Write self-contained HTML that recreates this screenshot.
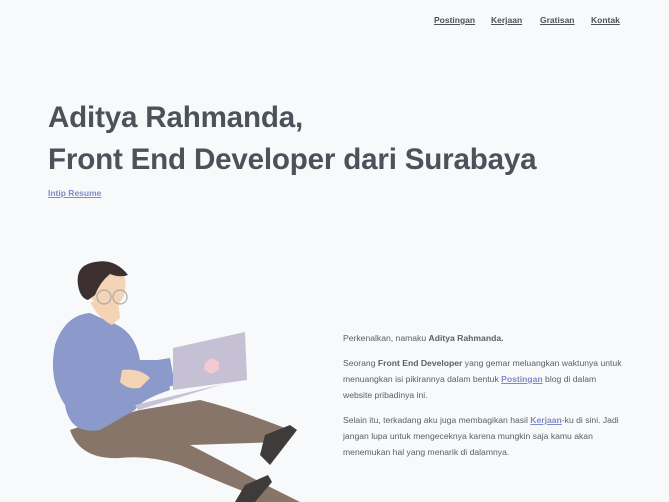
<!DOCTYPE html>
<html><head><meta charset="utf-8"><style>
body{margin:0;width:669px;height:502px;background:#f8f9fb;font-family:"Liberation Sans",sans-serif;color:#4b5259;overflow:hidden;position:relative}
a{color:#4b5259;font-weight:bold;text-decoration:underline}
.nav{position:absolute;top:15px;font-size:8.5px;font-weight:bold}
h1{position:absolute;left:48px;top:97px;margin:0;font-size:29.6px;line-height:42px;font-weight:bold;color:#4b5259;letter-spacing:-0.2px}
.resume{position:absolute;left:48px;top:188px;font-size:8.5px;color:#7f8bc6}
.txt{position:absolute;left:343px;top:330px;width:284px;font-size:8.6px;line-height:16px;color:#5a6068}
.txt p{margin:0 0 9px}
.txt a{color:#7f8bc6}
</style></head><body>
<a class="nav" style="left:434px">Postingan</a>
<a class="nav" style="left:491px">Kerjaan</a>
<a class="nav" style="left:540px">Gratisan</a>
<a class="nav" style="left:591px">Kontak</a>
<h1>Aditya Rahmanda,<br>Front End Developer dari Surabaya</h1>
<a class="resume">Intip Resume</a>
<svg style="position:absolute;left:40px;top:260px" width="270" height="242" viewBox="0 0 270 242">
<path d="M30 170 Q40 200 80 198 Q110 195 140 205 Q175 220 205 232 L200 242 L260 242 L220 222 Q180 200 150 185 L240 182 L250 170 Q200 150 160 140 L100 150 Q60 160 30 170Z" fill="#887569"/>
<path d="M225 175 L250 165 L257 170 L230 205 L220 195 Z" fill="#3f3b3a"/>
<path d="M205 225 L228 215 L232 222 L215 242 L195 242 Z" fill="#3f3b3a"/>
<path d="M15 85 Q25 55 50 53 L70 62 Q95 70 100 100 L125 100 L130 130 Q100 140 95 150 L60 170 Q30 175 25 145 Q8 120 15 85Z" fill="#8b99cb"/>
<path d="M105 102 L130 98 L135 125 L100 135Z" fill="#8b99cb"/>
<path d="M95 145 L200 120 L203 118 L98 150 Z" fill="#c8c2d6"/>
<path d="M133 88 L205 72 L207 120 L133 130 Z" fill="#c6c0d4"/>
<path d="M165 103 L172 98 L179 102 L179 110 L171 114 L164 110Z" fill="#f2cad0"/>
<path d="M82 110 Q100 108 110 118 L100 128 Q88 130 80 122Z" fill="#f5d3b5"/>
<path d="M50 42 Q58 58 72 65 L80 58 L78 40 Z" fill="#f5d3b5"/>
<path d="M50 20 Q55 5 75 8 Q88 12 85 30 Q83 45 70 48 Q55 48 50 35Z" fill="#f5d3b5"/>
<path d="M38 25 Q35 5 55 2 Q75 -2 88 15 Q80 18 70 14 Q60 22 55 35 L48 40 Q40 38 38 25Z" fill="#3b2f2f"/>
<circle cx="64" cy="37" r="7" fill="none" stroke="#aaa" stroke-width="1.2"/>
<circle cx="80" cy="37" r="7" fill="none" stroke="#aaa" stroke-width="1.2"/>
</svg>
<div class="txt">
<p>Perkenalkan, namaku <b>Aditya Rahmanda.</b></p>
<p>Seorang <b>Front End Developer</b> yang gemar meluangkan waktunya untuk menuangkan isi pikirannya dalam bentuk <a>Postingan</a> blog di dalam<br>website pribadinya ini.</p>
<p>Selain itu, terkadang aku juga membagikan hasil <a>Kerjaan</a>-ku di sini. Jadi<br>jangan lupa untuk mengeceknya karena mungkin saja kamu akan<br>menemukan hal yang menarik di dalamnya.</p>
</div>
</body></html>
